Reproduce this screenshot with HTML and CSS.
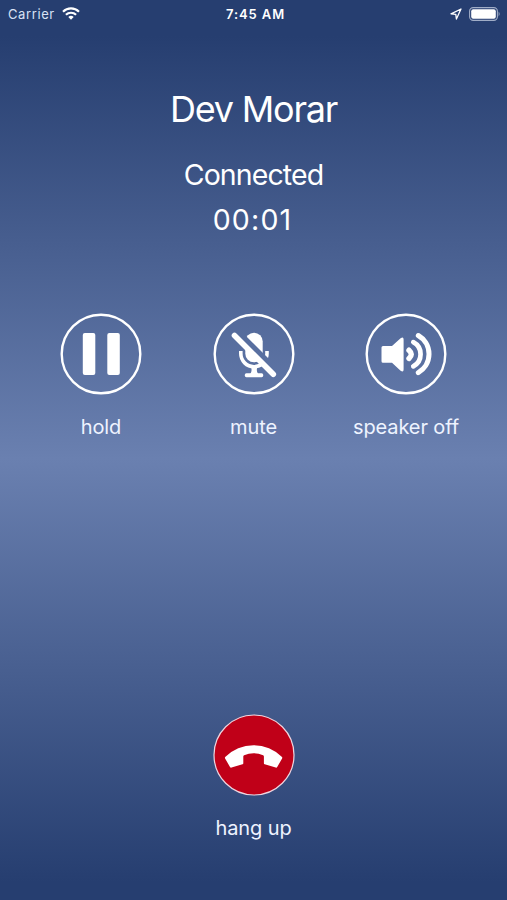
FILE: index.html
```html
<!DOCTYPE html>
<html lang="en">
<head>
  <meta charset="UTF-8" />
  <meta name="viewport" content="width=device-width, initial-scale=1.0"/>
  <title>Call</title>
  <link rel="stylesheet" href="styles.css">
</head>
<body>

  <!-- Status bar -->
  <header class="status-bar">
    <div class="status-left">
      <span class="carrier">Carrier</span>
      <svg class="wifi" width="18" height="13" viewBox="0 0 18 13" fill="none" stroke="#fff" stroke-width="2.2">
        <path d="M1 4.7a11.5 11.5 0 0 1 16 0"/>
        <path d="M3.9 7.8a7.4 7.4 0 0 1 10.2 0"/>
        <path d="M9 12.8l-2.7-2.8a4 4 0 0 1 5.4 0z" fill="#fff" stroke="none"/>
      </svg>
    </div>
    <div class="time">7:45 AM</div>
    <div class="status-right">
      <svg width="12" height="12" viewBox="0 0 12 12" fill="none" stroke="#fff" stroke-width="1.3" stroke-linejoin="round">
        <path d="M11 1L1 5.8l4.8.5.6 4.7z"/>
      </svg>
      <svg width="32" height="14" viewBox="0 0 32 14">
        <rect x=".6" y=".6" width="27.8" height="12.8" rx="3.6" fill="none" stroke="#a0adc7" stroke-width="1.1"/>
        <rect x="2.2" y="2.2" width="24.6" height="9.6" rx="2" fill="#fff"/>
        <path d="M29.6 4.6q2 2.4 0 4.8z" fill="#a0adc7"/>
      </svg>
    </div>
  </header>

  <!-- Caller info -->
  <main class="call">
    <h1 class="name">Dev Morar</h1>
    <p class="state">Connected</p>
    <p class="timer">00:01</p>

    <div class="controls">
      <button class="control">
        <svg class="icon" viewBox="0 0 82 82">
          <circle class="ring" cx="41" cy="41" r="39.3"/>
          <rect x="22.8" y="20" width="12.5" height="42" rx="2"/>
          <rect x="47.3" y="20" width="12.5" height="42" rx="2"/>
        </svg>
        <span>hold</span>
      </button>
      <button class="control">
        <svg class="icon" viewBox="0 0 82 82">
          <!-- gap above the slash -->
          <mask id="cut">
            <rect width="82" height="82" fill="#fff"/>
            <path d="M23.7 18L65.5 59.8" stroke="#000" stroke-width="6"/>
          </mask>
          <circle class="ring" cx="41" cy="41" r="39.3"/>
          <g mask="url(#cut)">
            <rect x="32.3" y="19.8" width="17.4" height="29.4" rx="8.7"/>
            <path class="line" d="M27.8 38v2.6a13.1 13.1 0 0 0 26.2 0V38" stroke-width="3.6"/>
            <path d="M38 54h6.4q-1.5 4 .8 7H37.2q2.3-3 .8-7z"/>
            <rect x="31.8" y="60.2" width="18.4" height="4" rx="1.6"/>
          </g>
          <path class="line round" d="M21.5 22.5l38.8 38.8" stroke-width="5.6"/>
        </svg>
        <span>mute</span>
      </button>
      <button class="control">
        <svg class="icon" viewBox="0 0 82 82">
          <circle class="ring" cx="41" cy="41" r="39.3"/>
          <path d="M18 33h9l8.6-7.8q3-2 3 1.3v30q0 3.2-3 1.300l-8.600-8H18q-1.500 0-1.500-1.500V34.500q0-1.500 1.500-1.500z"/>
          <path class="line round" d="M44 37.200q4.600 4.100 0 8.200" stroke-width="5.400"/>
          <path class="line round" d="M48.300 29.200a13.700 13.700 0 0 1 0 24.200" stroke-width="4.700"/>
          <path class="line round" d="M53.300 22.500a21.500 21.500 0 0 1 0 37.200" stroke-width="5"/>
        </svg>
        <span>speaker off</span>
      </button>
    </div>
  </main>

  <!-- Hang up -->
  <footer class="hangup">
    <button class="control">
      <svg class="icon" viewBox="0 0 82 82">
        <circle class="red" cx="41" cy="41" r="40"/>
        <path d="M12.200 43A40 40 0 0 1 69 43q.6.700.1 1.500L64.200 53q-.5.900-1.500.6L51.700 50.200q-.8-.2-.8-1v-6.700q0-.8-.8-1.200Q45.500 39.200 40.600 39.200T31.100 41.300q-.8.400-.8 1.200v6.700q0 .8-.8 1L18.500 53.600q-1 .3-1.500-.6L12.100 44.500q-.5-.8.1-1.500z"/>
      </svg>
      <span>hang up</span>
    </button>
  </footer>

</body>
</html>
```
FILE: styles.css
```css
* {
  box-sizing: border-box;
}

body {
  margin: 0;
  height: 100vh;
  display: flex;
  flex-direction: column;
  overflow: hidden;
  font-family: Inter, 'Liberation Sans', sans-serif;
  color: #fff;
  background: linear-gradient(to bottom, #263e70 0%, #263e70 4%, #6a80b0 51%, #263e70 98%, #263e70 100%);
}

.status-bar {
  display: grid;
  grid-template-columns: 1fr auto 1fr;
  align-items: center;
  height: 27px;
  padding: 0 6px 0 8px;
  font-size: 13px;
}

.status-left, .status-right {
  display: flex;
  align-items: center;
  gap: 7px;
}

.status-right {
  justify-content: flex-end;
}

.carrier {
  color: #d9e2f5;
  letter-spacing: 0.6px;
}

.time {
  margin-left: 2px;
  font-weight: 600;
  letter-spacing: 0.9px;
}

.call {
  flex: 1;
  text-align: center;
}

.name {
  margin: 60px 0 0;
  font-size: 36px;
  font-weight: 400;
  line-height: 44px;
  letter-spacing: -1.2px;
}

.state, .timer {
  margin: 0;
  font-size: 28.5px;
  line-height: 36px;
}

.state {
  margin-top: 26px;
  letter-spacing: -0.9px;
}

.timer {
  margin: 9px 2px 0 0;
  letter-spacing: 1.2px;
}

.controls {
  display: grid;
  grid-template-columns: repeat(3, 152.5px);
  justify-content: center;
  margin-top: 75px;
}

.control {
  display: flex;
  flex-direction: column;
  align-items: center;
  padding: 0;
  border: none;
  background: none;
  color: #eef3ff;
  font-family: inherit;
  font-size: 20px;
  line-height: 26px;
  letter-spacing: -0.1px;
  cursor: pointer;
}

.control span {
  margin-top: 19px;
}

.icon {
  width: 82px;
  height: 82px;
  fill: #fff;
}

.ring {
  fill: none;
  stroke: #fff;
  stroke-width: 2.4;
}

.line {
  fill: none;
  stroke: #fff;
}

.round {
  stroke-linecap: round;
}

.red {
  fill: #c00018;
  stroke: #f0d5df;
  stroke-width: 1.2;
}

.hangup {
  display: flex;
  justify-content: center;
  padding-bottom: 59px;
}
```
